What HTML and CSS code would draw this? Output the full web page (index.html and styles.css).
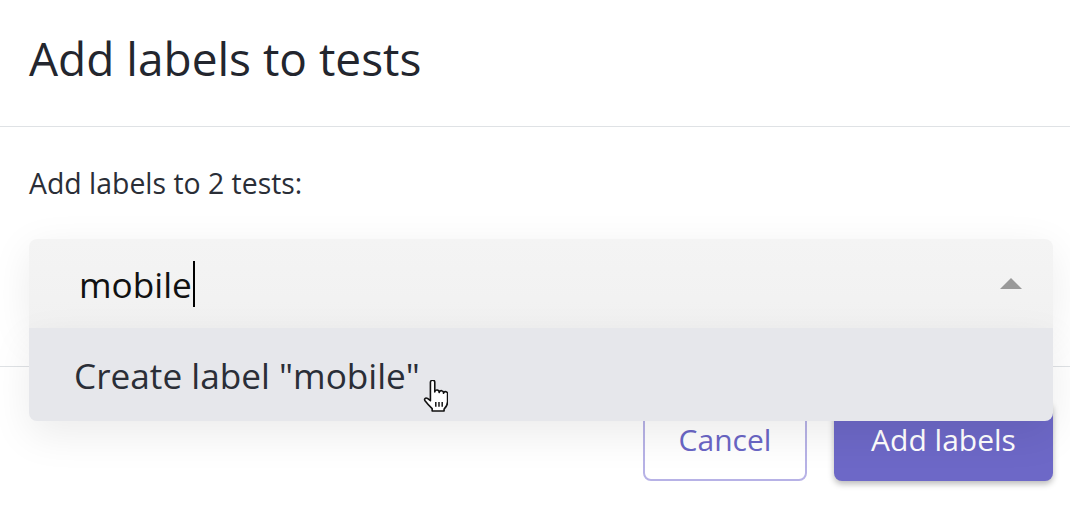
FILE: index.html
```html
<!DOCTYPE html>
<html lang="en">
<head>
<meta charset="utf-8">
<title>Add labels to tests</title>
<link rel="stylesheet" href="styles.css">
</head>
<body>
<div class="modal">
  <div class="modal-header">
    <h1 class="modal-title">Add labels to tests</h1>
  </div>
  <div class="modal-body">
    <p class="intro">Add labels to 2 tests:</p>
    <div class="combo">
      <div class="combo-input">
        <span class="combo-value">mobile</span><span class="caret"></span>
        <span class="combo-arrow"></span>
      </div>
      <div class="combo-menu">
        <div class="combo-option">Create label "mobile"</div>
        <svg class="pointer" viewBox="0 0 17 22" width="25" height="32" aria-hidden="true">
          <path d="M5 1.6a1.5 1.5 0 0 1 3 0V8.2a1.5 1.5 0 0 1 3 .4a1.5 1.5 0 0 1 3 .5a1.4 1.4 0 0 1 2.8.8V15c0 2.5-1.4 4-2.4 5v1.3H6.2v-1.6C4.6 18.2 2.6 16 1.3 14.3c-.8-1.2.3-2.5 1.7-1.6L5 14.2Z" fill="#fff" stroke="#111" stroke-width="1.1" stroke-linejoin="round"/>
          <path d="M8.7 15.2v3.2M10.9 15.2v3.2M13.1 15.2v3.2" stroke="#111" stroke-width="1"/>
        </svg>
      </div>
    </div>
  </div>
  <div class="modal-footer">
    <button class="btn btn-outline">Cancel</button>
    <button class="btn btn-primary">Add labels</button>
  </div>
</div>
</body>
</html>
```

FILE: styles.css
```css
html, body {
  margin: 0;
  padding: 0;
  background: #ffffff;
}

body {
  font-family: "Open Sans", "Noto Sans", "Liberation Sans", sans-serif;
  width: 1070px;
  height: 510px;
  overflow: hidden;
}

.modal {
  display: flex;
  flex-direction: column;
}

.modal-header {
  padding: 27px 29px 37px;
  border-bottom: 1px solid #dfe2e5;
}

.modal-title {
  margin: 0;
  font-size: 46px;
  font-weight: 400;
  line-height: 62px;
  color: #23262e;
}

.modal-body {
  padding: 36px 17px 38px 29px;
}

.intro {
  margin: 0 0 36px;
  font-size: 28.4px;
  line-height: 40px;
  color: #2a2e37;
}

.combo {
  position: relative;
  z-index: 2;
}

.combo-input {
  display: flex;
  align-items: center;
  height: 89px;
  padding: 0 31px 0 50px;
  background: linear-gradient(#f4f4f4, #f1f1f1);
  border-radius: 8px 8px 0 0;
  box-shadow: 0 10px 40px rgba(0, 0, 0, 0.08);
}

.combo-value {
  font-size: 35.2px;
  line-height: 46px;
  color: #111111;
}

.caret {
  display: inline-block;
  width: 2px;
  height: 46px;
  margin-left: 1px;
  background: #000000;
}

.combo-arrow {
  margin-left: auto;
  width: 0;
  height: 0;
  border-left: 11px solid transparent;
  border-right: 11px solid transparent;
  border-bottom: 11px solid #999999;
}

.combo-menu {
  position: absolute;
  top: 89px;
  left: 0;
  right: 0;
  height: 93px;
  display: flex;
  align-items: center;
  padding-left: 45px;
  background: #e6e7eb;
  border-radius: 0 0 8px 8px;
  box-shadow: 0 14px 40px rgba(0, 0, 0, 0.08);
}

.combo-option {
  font-size: 35.2px;
  line-height: 46px;
  color: #2a2e37;
}

.pointer {
  position: absolute;
  left: 394px;
  top: 52px;
}

.modal-footer {
  display: flex;
  justify-content: flex-end;
  gap: 27px;
  padding: 34px 17px 0 29px;
  border-top: 1px solid #dfe2e5;
}

.btn {
  height: 80px;
  padding: 0 0 3px;
  font-family: inherit;
  font-size: 30px;
  border-radius: 8px;
  cursor: pointer;
}

.btn-outline {
  width: 164px;
  background: #ffffff;
  color: #6a66c6;
  border: 2px solid #b7b2e6;
}

.btn-primary {
  width: 219px;
  background: #6d68c7;
  color: #ffffff;
  border: none;
  box-shadow: 0 3px 6px rgba(0, 0, 0, 0.28);
}
```
